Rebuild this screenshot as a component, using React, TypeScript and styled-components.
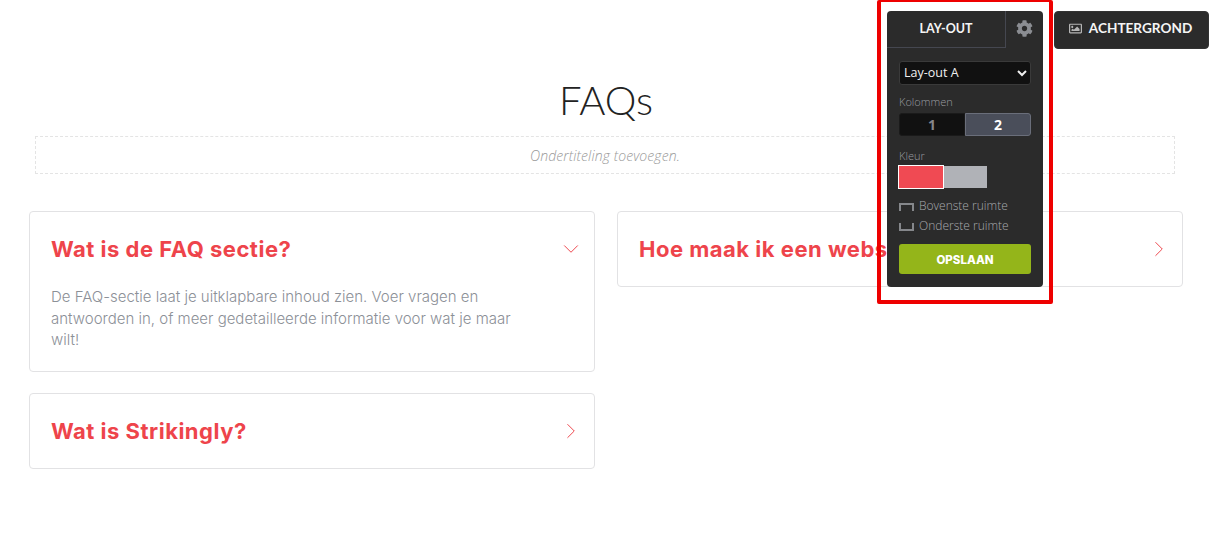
import React from "react";
import styled, { createGlobalStyle } from "styled-components";
import { FaCog, FaRegImage } from "react-icons/fa";
import { ChevronDown, ChevronRight } from "lucide-react";

const Global = createGlobalStyle`
  html, body { margin: 0; padding: 0; background: #fff; height: 533px; overflow: hidden; }
  * { box-sizing: border-box; }
`;

const Page = styled.div`
  position: relative;
  width: 1215px;
  height: 533px;
  padding: 77px 32px 0 29px;
  font-family: "Inter", "Liberation Sans", sans-serif;
`;

const Title = styled.h1`
  margin: 0;
  height: 46px;
  text-align: center;
  font: 300 40px/46px "Lato", sans-serif;
  color: #222;
`;

const Subtitle = styled.div`
  margin: 13px 8px 0 6px;
  height: 38px;
  border: 1px dashed #e4e4e4;
  text-align: center;
  font: italic 300 14px/38px "Open Sans", sans-serif;
  letter-spacing: 0.1px;
  color: #999;
`;

const Columns = styled.div`
  margin-top: 37px;
  display: grid;
  grid-template-columns: 566px 566px;
  column-gap: 22px;
  align-items: start;
`;

const Column = styled.div`
  display: flex;
  flex-direction: column;
  gap: 21px;
`;

const Card = styled.section`
  border: 1px solid #e2e2e4;
  border-radius: 4px;
  padding: 0 21px;
  background: #fff;
`;

const CardHead = styled.div`
  height: 74px;
  display: flex;
  align-items: center;
  justify-content: space-between;
`;

const Question = styled.h3`
  margin: 0;
  font: 700 22px/26px "Inter", sans-serif;
  letter-spacing: 0.5px;
  color: #ee444b;
`;

const Arrow = styled.span`
  display: flex;
  color: #ee444b;
  margin-right: -11px;
`;

const Answer = styled.p`
  margin: 0;
  padding: 0 40px 0 0;
  font: 300 15px/21.5px "Inter", sans-serif;
  color: #8c9097;
  height: 85px;
`;

const Toolbar = styled.div`
  position: absolute;
  top: 11px;
  right: 6px;
  display: flex;
  align-items: flex-start;
  gap: 11px;
`;

const Panel = styled.div`
  width: 156px;
  height: 276px;
  background: #2b2b2b;
  border-radius: 4px;
  font-family: "Open Sans", sans-serif;
`;

const Tabs = styled.div`
  display: flex;
  height: 37px;
`;

const Tab = styled.div`
  width: 119px;
  border-right: 1px solid #454750;
  border-bottom: 1px solid #454750;
  text-align: center;
  font: 700 12.5px/35px "Lato", sans-serif;
  color: #f5f5f5;
`;

const GearTab = styled.div`
  flex: 1;
  display: flex;
  align-items: center;
  justify-content: center;
  padding-bottom: 2px;
  color: #8b8d92;
`;

const PanelBody = styled.div`
  padding: 13px 12px 0;
`;

const LayoutSelect = styled.select`
  display: block;
  width: 132px;
  height: 24px;
  background: #111;
  color: #f0f0f0;
  border: 1px solid #3a3a3a;
  border-radius: 3px;
  padding: 0 0 2px;
  font: 400 12.5px "Open Sans", sans-serif;
  outline: none;
`;

const FieldLabel = styled.div`
  margin-top: 10px;
  font: 300 11px/14px "Open Sans", sans-serif;
  color: #9a9ca0;
`;

const Segments = styled.div`
  display: flex;
  height: 23px;
  margin-top: 4px;
  width: 132px;
`;

const Segment = styled.div<{ $active?: boolean }>`
  flex: 1;
  text-align: center;
  font: 700 14px/22px "Open Sans", sans-serif;
  background: ${(p) => (p.$active ? "#4a4e5a" : "#111")};
  color: ${(p) => (p.$active ? "#fff" : "#85878b")};
  border: 1px solid ${(p) => (p.$active ? "#6a6e7a" : "#1a1a1a")};
  border-radius: ${(p) => (p.$active ? "0 3px 3px 0" : "3px 0 0 3px")};
`;

const ColorLabel = styled(FieldLabel)`
  margin-top: 13px;
`;

const Swatches = styled.div`
  display: flex;
  align-items: center;
  margin-top: 2px;
  margin-left: -1px;
`;

const Swatch = styled.div<{ $color: string; $selected?: boolean }>`
  width: ${(p) => (p.$selected ? 46 : 43)}px;
  height: ${(p) => (p.$selected ? 24 : 22)}px;
  background: ${(p) => p.$color};
  border: ${(p) => (p.$selected ? "1px solid #fff" : "0")};
`;

const SpaceRows = styled.div`
  margin-top: 9px;
  display: flex;
  flex-direction: column;
  gap: 5px;
`;

const SpaceRow = styled.div`
  display: flex;
  align-items: center;
  gap: 5px;
  height: 15px;
  font: 300 12px/15px "Open Sans", sans-serif;
  color: #a8aaae;
`;

const SpaceMark = styled.span<{ $edge: "top" | "bottom" }>`
  width: 15px;
  height: 8px;
  margin-top: 3px;
  border: 2px solid #85878b;
  ${(p) => (p.$edge === "top" ? "border-bottom: 0;" : "border-top: 0;")}
`;

const SaveButton = styled.button`
  display: block;
  width: 132px;
  height: 30px;
  margin-top: 11px;
  background: #94b51a;
  border: 0;
  border-radius: 3px;
  color: #fff;
  font: 800 11.5px/30px "Inter", sans-serif;
`;

const BackgroundButton = styled.button`
  width: 155px;
  height: 38px;
  background: #2b2b2b;
  border: 1px solid #333;
  border-radius: 4px;
  color: #f5f5f5;
  display: flex;
  align-items: center;
  justify-content: center;
  gap: 7px;
  font: 700 13.6px/1 "Lato", sans-serif;
  padding: 0 2px 3px 0;
  svg { color: #b5b5b5; }
`;

const Highlight = styled.div`
  position: absolute;
  left: 877px;
  top: 0;
  width: 176px;
  height: 304px;
  border: 4px solid #ee0000;
  border-top-width: 2px;
  border-radius: 2px;
  pointer-events: none;
`;

export default function App() {
  return (
    <Page>
      <Global />
      <Title>FAQs</Title>
      <Subtitle>Ondertiteling toevoegen.</Subtitle>
      <Columns>
        <Column>
          <Card>
            <CardHead>
              <Question>Wat is de FAQ sectie?</Question>
              <Arrow><ChevronDown size={26} strokeWidth={0.9} /></Arrow>
            </CardHead>
            <Answer>
              De FAQ-sectie laat je uitklapbare inhoud zien. Voer vragen en antwoorden in, of meer gedetailleerde informatie voor wat je maar wilt!
            </Answer>
          </Card>
          <Card>
            <CardHead>
              <Question>Wat is Strikingly?</Question>
              <Arrow><ChevronRight size={26} strokeWidth={0.9} /></Arrow>
            </CardHead>
          </Card>
        </Column>
        <Column>
          <Card>
            <CardHead>
              <Question>Hoe maak ik een website?</Question>
              <Arrow><ChevronRight size={26} strokeWidth={0.9} /></Arrow>
            </CardHead>
          </Card>
        </Column>
      </Columns>
      <Highlight />
      <Toolbar>
        <Panel>
          <Tabs>
            <Tab>LAY-OUT</Tab>
            <GearTab><FaCog size={17} /></GearTab>
          </Tabs>
          <PanelBody>
            <LayoutSelect defaultValue="a">
              <option value="a">Lay-out A</option>
            </LayoutSelect>
            <FieldLabel>Kolommen</FieldLabel>
            <Segments>
              <Segment>1</Segment>
              <Segment $active>2</Segment>
            </Segments>
            <ColorLabel>Kleur</ColorLabel>
            <Swatches>
              <Swatch $color="#f04a53" $selected />
              <Swatch $color="#b0b2b7" />
            </Swatches>
            <SpaceRows>
              <SpaceRow><SpaceMark $edge="top" />Bovenste ruimte</SpaceRow>
              <SpaceRow><SpaceMark $edge="bottom" />Onderste ruimte</SpaceRow>
            </SpaceRows>
            <SaveButton>OPSLAAN</SaveButton>
          </PanelBody>
        </Panel>
        <BackgroundButton><FaRegImage size={13} />ACHTERGROND</BackgroundButton>
      </Toolbar>
    </Page>
  );
}
